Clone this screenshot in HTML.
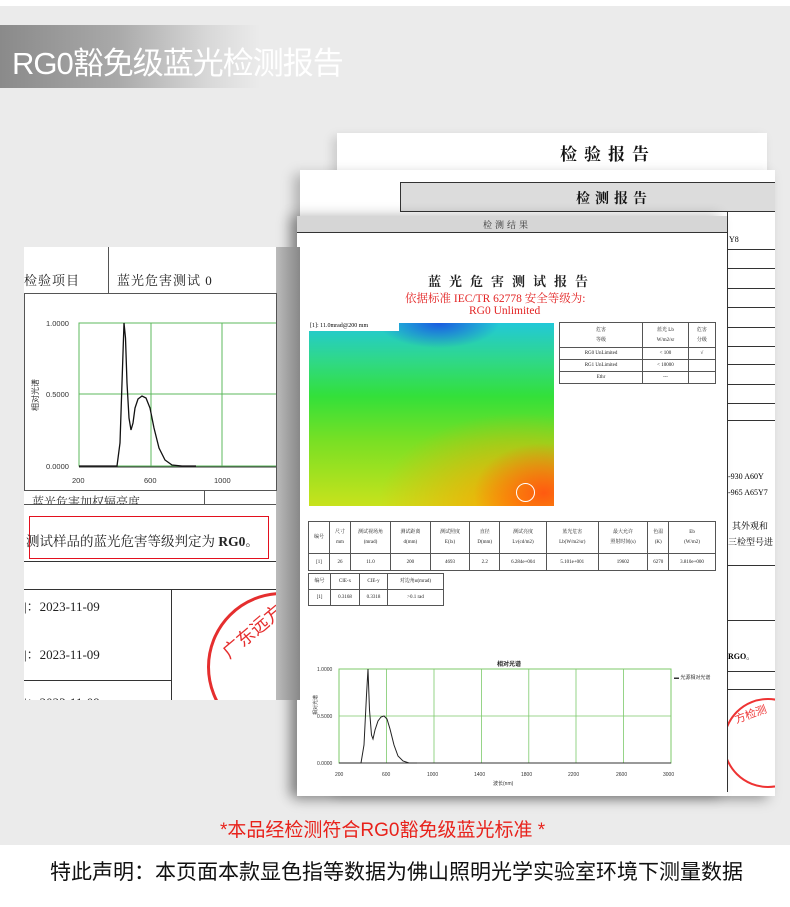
<!DOCTYPE html>
<html><head><meta charset="utf-8"><style>
*{margin:0;padding:0;box-sizing:border-box}
body{width:790px;height:907px;position:relative;overflow:hidden;background:#fff;font-family:"Liberation Sans","Noto Sans CJK SC",sans-serif}
.a{position:absolute}
.s{font-family:"Liberation Serif","Noto Serif CJK SC",serif}
.t{position:absolute;white-space:nowrap}
table{border-collapse:collapse;position:absolute;font-family:"Liberation Serif","Noto Serif CJK SC",serif;font-size:5px;color:#222}
td{border:1px solid #555;text-align:center;padding:0;line-height:1}
</style></head><body>
<div class="a" style="left:0;top:6px;width:790px;height:839px;background:#ebebeb"></div>
<div class="a" style="left:0;top:25px;width:260px;height:63px;background:linear-gradient(90deg,#8a8a8a 0%,#a9a9a9 45%,#d8d8d8 80%,rgba(235,235,235,0) 100%)"></div>
<div class="t" style="left:12px;top:38px;font-size:31px;color:#fff;letter-spacing:-1px">RG0豁免级蓝光检测报告</div>

<div class="a" style="left:337px;top:133px;width:430px;height:660px;background:#fff;box-shadow:-4px 4px 10px rgba(0,0,0,.15)"></div>
<div class="t s" style="left:560px;top:140px;font-size:17px;font-weight:bold;letter-spacing:7px;color:#111">检验报告</div>
<div class="a" style="left:300px;top:170px;width:475px;height:626px;background:#fff;box-shadow:-6px 4px 12px rgba(0,0,0,.25)"></div>
<div class="a" style="left:400px;top:182px;width:375px;height:30px;background:#dcdcdc;border-top:1px solid #333;border-bottom:1px solid #333;border-left:1px solid #333"></div>
<div class="t s" style="left:576px;top:188px;font-size:14px;font-weight:bold;letter-spacing:5px;color:#111">检测报告</div>
<div class="a" style="left:727px;top:212px;width:48px;height:580px;border-left:1px solid #333;overflow:hidden">
 <div class="a" style="left:0;top:37px;width:48px;border-top:1px solid #333"></div>
 <div class="a" style="left:0;top:56px;width:48px;border-top:1px solid #333"></div>
 <div class="a" style="left:0;top:76px;width:48px;border-top:1px solid #333"></div>
 <div class="a" style="left:0;top:95px;width:48px;border-top:1px solid #333"></div>
 <div class="a" style="left:0;top:115px;width:48px;border-top:1px solid #333"></div>
 <div class="a" style="left:0;top:134px;width:48px;border-top:1px solid #333"></div>
 <div class="a" style="left:0;top:152px;width:48px;border-top:1px solid #333"></div>
 <div class="a" style="left:0;top:172px;width:48px;border-top:1px solid #333"></div>
 <div class="a" style="left:0;top:191px;width:48px;border-top:1px solid #333"></div>
 <div class="a" style="left:0;top:208px;width:48px;border-top:1px solid #333"></div>
 <div class="a" style="left:0;top:353px;width:48px;border-top:1px solid #333"></div>
 <div class="a" style="left:0;top:408px;width:48px;border-top:1px solid #333"></div>
 <div class="a" style="left:0;top:459px;width:48px;border-top:1px solid #333"></div>
 <div class="a" style="left:0;top:477px;width:48px;border-top:1px solid #333"></div>
 <div class="t s" style="left:1px;top:23px;font-size:8px">Y8</div>
 <div class="t s" style="left:0;top:260px;font-size:8px">-930 A60Y</div>
 <div class="t s" style="left:0;top:276px;font-size:8px">-965 A65Y7</div>
 <div class="t s" style="left:4px;top:307px;font-size:9px">其外观和</div>
 <div class="t s" style="left:0;top:323px;font-size:9px">三检型号进</div>
 <div class="t s" style="left:0;top:439px;font-size:8px;font-weight:bold">RGO。</div>
 <div class="a" style="left:-5px;top:486px;width:90px;height:90px;border:2px solid #e33;border-radius:50%"></div>
 <div class="t" style="left:6px;top:494px;font-size:11px;color:#e33;transform:rotate(-20deg)">方检测</div>
</div>

<div class="a" style="left:297px;top:216px;width:430px;height:580px;background:#fff;box-shadow:-8px 0 12px rgba(0,0,0,.3)"></div>
<div class="a" style="left:297px;top:216px;width:430px;height:17px;background:#d6d6d6;border-bottom:1px solid #333"></div>
<div class="t s" style="left:483px;top:218px;font-size:9px;letter-spacing:3px;color:#333">检测结果</div>
<div class="t s" style="left:428px;top:271px;font-size:13px;font-weight:bold;letter-spacing:8px;color:#222">蓝光危害测试报告</div>
<div class="t s" style="left:405px;top:290px;font-size:11.5px;color:#e32424">依据标准 IEC/TR 62778 安全等级为:</div>
<div class="t s" style="left:469px;top:305px;font-size:11.5px;color:#e32424">RG0 Unlimited</div>
<div class="a" style="left:309px;top:323px;width:245px;height:183px;background:
radial-gradient(ellipse 70px 50px at 235px 170px,#ff5a10,rgba(255,120,20,0) 100%),
radial-gradient(ellipse 140px 90px at 210px 180px,rgba(255,160,0,.9),rgba(255,200,0,0) 100%),
radial-gradient(ellipse 60px 25px at 130px 0,#1a5be0,rgba(30,120,230,0) 100%),
linear-gradient(180deg,#22c8d8 0%,#2fd88a 20%,#33e03a 40%,#7ae024 65%,#c8e21c 100%)"></div>
<div class="a" style="left:309px;top:323px;width:90px;height:8px;background:#fff"></div>
<div class="t s" style="left:310px;top:323px;font-size:6px">[1]:  11.0mrad@200 mm</div>
<div class="a" style="left:516px;top:483px;width:19px;height:19px;border:1px solid #fff;border-radius:50%"></div>

<table style="left:559px;top:322px;width:157px">
<tr style="height:25px"><td>危害<br><br>等级</td><td>蓝光 Lb<br><br>W/m2/sr</td><td>危害<br><br>分级</td></tr>
<tr style="height:12px"><td>RG0 UnLimited</td><td>&lt; 100</td><td>√</td></tr>
<tr style="height:12px"><td>RG1 UnLimited</td><td>&lt; 10000</td><td></td></tr>
<tr style="height:12px"><td>Ethr</td><td>---</td><td></td></tr>
</table>
<table style="left:308px;top:521px;width:408px">
<tr style="height:32px"><td style="width:21px">编号</td><td style="width:21px">尺寸<br><br>mm</td><td style="width:40px">测试视场角<br><br>(mrad)</td><td>测试距离<br><br>d(mm)</td><td>测试照度<br><br>E(lx)</td><td>直径<br><br>D(mm)</td><td>测试亮度<br><br>Lv(cd/m2)</td><td>蓝光危害<br><br>Lb(W/m2/sr)</td><td>最大允许<br><br>照射时间(s)</td><td>色温<br><br>(K)</td><td>Eb<br><br>(W/m2)</td></tr>
<tr style="height:17px"><td>[1]</td><td>26</td><td>11.0</td><td>200</td><td>4693</td><td>2.2</td><td>6.284e+004</td><td>5.101e+001</td><td>19602</td><td>6270</td><td>3.810e+000</td></tr>
</table>
<table style="left:308px;top:573px;width:136px">
<tr style="height:16px"><td style="width:22px">编号</td><td style="width:29px">CIE-x</td><td style="width:28px">CIE-y</td><td>对边角α(mrad)</td></tr>
<tr style="height:16px"><td>[1]</td><td>0.3168</td><td>0.3318</td><td>&gt;0.1 rad</td></tr>
</table>

<svg class="a" style="left:297px;top:655px" width="430" height="135">
<text x="200" y="11" font-size="6" font-weight="bold" fill="#222" font-family="Noto Sans CJK SC">相对光谱</text>
<rect x="42" y="14" width="332" height="94" fill="none" stroke="#7cc96a" stroke-width="1"/>
<g stroke="#7cc96a" stroke-width="0.8">
<line x1="89.4" y1="14" x2="89.4" y2="108"/><line x1="137" y1="14" x2="137" y2="108"/><line x1="184.4" y1="14" x2="184.4" y2="108"/><line x1="231.8" y1="14" x2="231.8" y2="108"/><line x1="279" y1="14" x2="279" y2="108"/><line x1="326.6" y1="14" x2="326.6" y2="108"/><line x1="42" y1="61" x2="374" y2="61"/></g>
<line x1="42" y1="108" x2="374" y2="108" stroke="#333"/>
<path d="M42 108 L64 108 L67 90 L69.5 40 L71 14 L72.5 55 L74.5 80 L76 84 L78 75 L81 66 L84 62 L87 61 L90 64 L93 74 L97 90 L101 101 L106 106 L112 108 L120 108" fill="none" stroke="#222" stroke-width="1"/>
<g font-size="5" fill="#333"><text x="20" y="16">1.0000</text><text x="20" y="63">0.5000</text><text x="20" y="110">0.0000</text>
<text x="38" y="121">200</text><text x="85" y="121">600</text><text x="130" y="121">1000</text><text x="177" y="121">1400</text><text x="224" y="121">1800</text><text x="271" y="121">2200</text><text x="319" y="121">2600</text><text x="366" y="121">3000</text>
<text x="196" y="130">波长(nm)</text><text x="377" y="24">▬ 光源相对光谱</text></g>
<text x="20" y="60" font-size="5" fill="#333" transform="rotate(-90 20 60)" font-family="Noto Sans CJK SC">相对光谱</text>
</svg>

<div class="a" style="left:276px;top:247px;width:24px;height:453px;background:linear-gradient(90deg,#bbb,#888)"></div>
<div class="a" style="left:24px;top:247px;width:252px;height:453px;background:#fff"></div>
<div class="a" style="left:108px;top:247px;width:1px;height:46px;background:#555"></div>
<div class="t s" style="left:24px;top:270px;font-size:13px;color:#222;letter-spacing:1px">检验项目</div>
<div class="t s" style="left:117px;top:270px;font-size:13px;color:#222;letter-spacing:1px">蓝光危害测试 0</div>
<div class="a" style="left:24px;top:293px;width:253px;height:198px;border:1px solid #555;background:#fff"></div>
<svg class="a" style="left:24px;top:293px" width="252" height="198">
<rect x="55" y="30" width="200" height="143" fill="none" stroke="#5cb85c"/>
<line x1="127" y1="30" x2="127" y2="173" stroke="#5cb85c"/><line x1="198" y1="30" x2="198" y2="173" stroke="#5cb85c"/><line x1="55" y1="101" x2="260" y2="101" stroke="#5cb85c"/>
<line x1="55" y1="174" x2="252" y2="174" stroke="#333"/>
<path d="M55 173 L93 173 L96 150 L98 90 L100 30 L101.5 45 L103 90 L105 125 L107 137 L109 130 L111 115 L114 106 L118 103 L122 105 L126 115 L130 135 L135 155 L141 167 L148 172 L158 173 L172 173" fill="none" stroke="#111" stroke-width="1.3"/>
<g font-size="7.5" fill="#333"><text x="22" y="33">1.0000</text><text x="22" y="104">0.5000</text><text x="22" y="176">0.0000</text><text x="48" y="190">200</text><text x="120" y="190">600</text><text x="190" y="190">1000</text></g>
<text x="14" y="118" font-size="8" fill="#333" transform="rotate(-90 14 118)" font-family="Noto Sans CJK SC">相对光谱</text>
</svg>
<div class="a" style="left:24px;top:491px;width:252px;height:14px;border-bottom:1px solid #555;overflow:hidden">
<div class="t s" style="left:8px;top:2px;font-size:12px;color:#333">蓝光危害加权辐亮度</div></div>
<div class="a" style="left:204px;top:491px;width:1px;height:14px;background:#555"></div>
<div class="a" style="left:29px;top:516px;width:240px;height:43px;border:1.5px solid #e3101e"></div>
<div class="t s" style="left:26px;top:530px;font-size:13.5px;color:#222">测试样品的蓝光危害等级判定为 <b>RG0</b>。</div>
<div class="a" style="left:24px;top:561px;width:252px;height:1px;background:#333"></div>
<div class="a" style="left:24px;top:589px;width:252px;height:1px;background:#333"></div>
<div class="a" style="left:171px;top:589px;width:1px;height:111px;background:#333"></div>
<div class="a" style="left:24px;top:680px;width:147px;height:1px;background:#333"></div>
<div class="t s" style="left:24px;top:596px;font-size:13px;color:#222">|：2023-11-09</div>
<div class="t s" style="left:24px;top:644px;font-size:13px;color:#222">|：2023-11-09</div>
<div class="t s" style="left:24px;top:692px;font-size:13px;color:#222;height:8px;overflow:hidden">|：2023-11-09</div>
<div class="a" style="left:172px;top:590px;width:104px;height:110px;overflow:hidden">
<div class="a" style="left:35px;top:2px;width:150px;height:150px;border:3px solid #e52e2e;border-radius:50%"></div>
<div class="t" style="left:42px;top:22px;font-size:18px;color:#e52e2e;transform:rotate(-40deg)">广东远方检</div>
</div>

<div class="t" style="left:220px;top:815px;font-size:19px;color:#e8221b">*本品经检测符合RG0豁免级蓝光标准 *</div>
<div class="t" style="left:50px;top:856px;font-size:21px;color:#111">特此声明：本页面本款显色指等数据为佛山照明光学实验室环境下测量数据</div>
</body></html>
